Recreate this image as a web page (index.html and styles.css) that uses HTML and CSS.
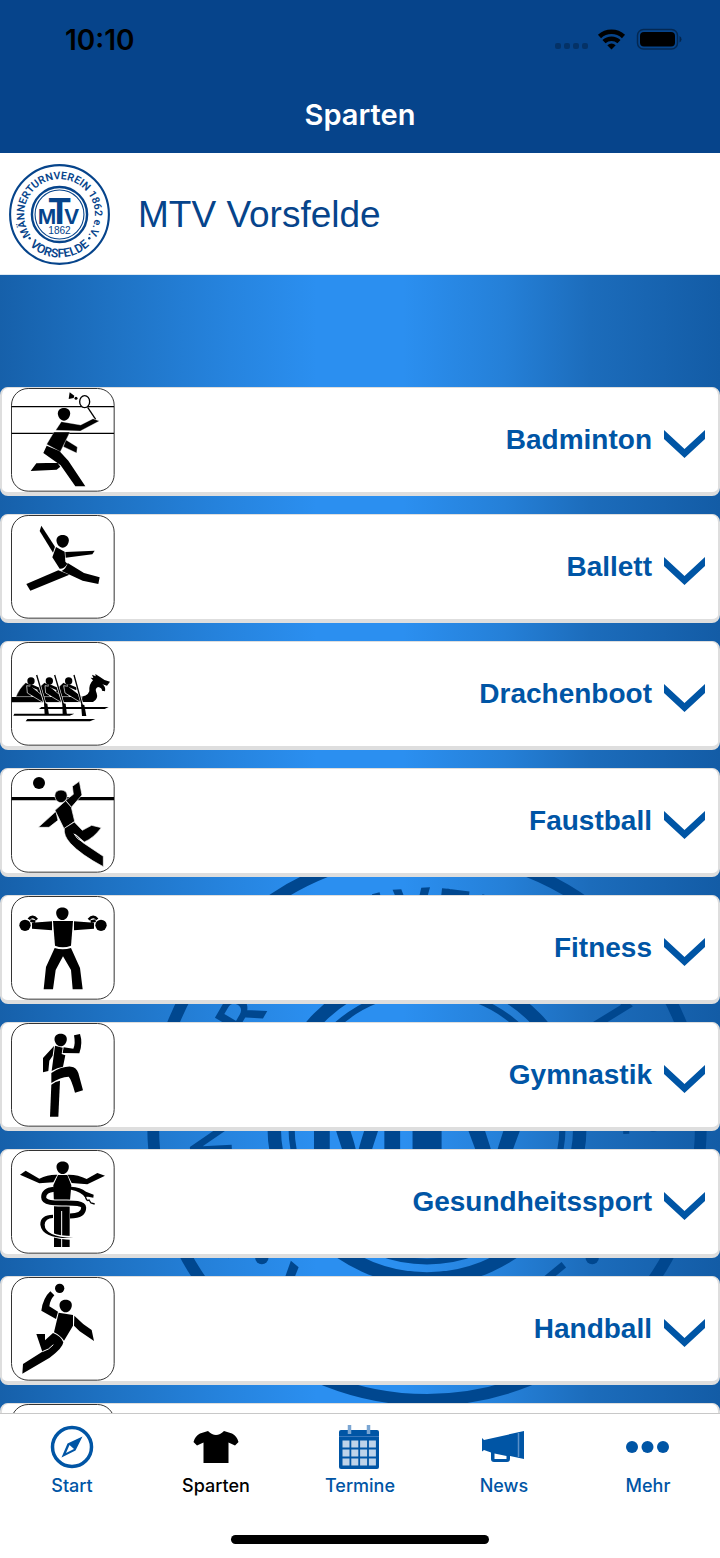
FILE: index.html
```html
<!DOCTYPE html>
<html lang="de">
<head>
<meta charset="utf-8">
<meta name="viewport" content="width=device-width, initial-scale=1">
<title>Sparten</title>
<link rel="stylesheet" href="styles.css">
</head>
<body>
<svg class="defs" aria-hidden="true">
  <defs>
    <path id="arc-top" d="M-28.500 20.300A35 35 0 1 1 28.500 20.300"/>
    <path id="arc-bottom" d="M-37 21A42.500 42.500 0 0 0 37 21"/>
    <symbol id="emblem" viewBox="-50 -50 100 100">
      <g fill="none" stroke="currentColor">
        <circle r="48.900" stroke-width="2.100"/>
        <circle r="27.300" stroke-width="2.400"/>
        <circle r="24.200" stroke-width="1.100"/>
      </g>
      <g fill="currentColor" text-anchor="middle">
        <text class="ring-text"><textPath href="#arc-top" startOffset="50%">MÄNNERTURNVEREIN 1862 e.V.</textPath></text>
        <text class="ring-text ring-town"><textPath href="#arc-bottom" startOffset="50%">VORSFELDE</textPath></text>
        <circle cx="-29.500" cy="23.500" r="1.200"/><circle cx="29.500" cy="23.500" r="1.200"/>
        <text class="mono-side" x="-12.500" y="9">M</text>
        <text class="mono-mid" x="0" y="9">T</text>
        <text class="mono-side" x="12" y="9">V</text>
        <text class="year" x="0" y="19">1862</text>
      </g>
    </symbol>
    <symbol id="chevron" viewBox="0 0 41 28"><path d="M0 0 20.500 19 41 0V9L20.500 28 0 9z" fill="currentColor"/></symbol>
    <path id="head" d="M-18.500-3C-18.500-24 18.500-24 18.500-3 18.500 9 10 19 0 19S-18.500 9-18.500-3z"/>
  </defs>
</svg>

<header class="topbar">
  <div class="status">
    <span class="clock">10:10</span>
    <svg class="status-icons" viewBox="0 0 128 24" aria-hidden="true">
      <g opacity=".25"><rect x="0" y="15" width="6" height="6" rx="2"/><rect x="9" y="15" width="6" height="6" rx="2"/><rect x="18" y="15" width="6" height="6" rx="2"/><rect x="27" y="15" width="6" height="6" rx="2"/></g>
      <g fill="none" stroke="#000" stroke-width="4.500"><path d="M44.500 8.500a17.500 17.500 0 0 1 24 0"/><path d="M49 13.700a11 11 0 0 1 15 0"/></g>
      <path d="M52.300 17.300a6.500 6.500 0 0 1 8.400 0L56.500 21.600z"/>
      <rect x="82.500" y="1.500" width="40" height="19.500" rx="6" fill="none" stroke="#000" stroke-opacity=".4" stroke-width="1.500"/>
      <rect x="85" y="4" width="35" height="14.500" rx="4"/>
      <path d="M124.500 8v6.500q2-1 2-3.250T124.500 8" opacity=".45"/>
    </svg>
  </div>
  <h1 class="title">Sparten</h1>
</header>

<div class="brand">
  <svg class="brand-logo" aria-hidden="true"><use href="#emblem"/></svg>
  <span class="brand-name">MTV Vorsfelde</span>
</div>

<main class="content">
  <svg class="watermark" aria-hidden="true"><use href="#emblem"/></svg>
  <div class="list">
    <button class="card" type="button">
      <svg class="picto" viewBox="33 26 312 312" aria-hidden="true">
        <rect class="frame" x="34.500" y="27.500" width="308" height="308" rx="50"/>
        <path d="M35 82H342M35 162H342" stroke="#000" stroke-width="4"/>
        <path d="M209 39 223 49 221 56 206 59z"/><circle cx="228" cy="57" r="4.500"/>
        <ellipse cx="254" cy="67" rx="15" ry="18" fill="#fff" stroke="#000" stroke-width="4"/>
        <path d="M263 84 287 120" stroke="#000" stroke-width="4"/>
        <use href="#head" x="192" y="105"/>
        <g stroke="#fff" stroke-width="1">
          <path d="M184 127 242 137 279 118 298 125 241 155 167 153z"/>
          <path d="M197 181 232 203 230 221 190 202z"/>
          <path d="M162 158H210L181 217 140 195z"/>
        </g>
        <path d="M109 252 172 250 181 262 170 271 92 275zM140 199 178 215 205 244 256 321H226L182 258 130 221z"/>
      </svg>
      <span class="label">Badminton</span><svg class="chevron" aria-hidden="true"><use href="#chevron"/></svg>
    </button>
    <button class="card" type="button">
      <svg class="picto" viewBox="33 14 312 312" aria-hidden="true">
        <rect class="frame" x="34.500" y="15.500" width="308" height="308" rx="50"/>
        <path d="M124 46 165 109 159 127 119 62z"/>
        <use href="#head" x="188" y="93"/>
        <path d="M196 125 284 121 277 132 197 142z"/>
        <path d="M168 110 194 124 196 154 202 160Q193 176 179 175L157 141z"/>
        <path d="M175 180 208 193 91 241 79 221z"/>
        <path d="M203 158 252 188 299 201 295 221 248 211 185 182Q199 174 203 158z"/>
      </svg>
      <span class="label">Ballett</span><svg class="chevron" aria-hidden="true"><use href="#chevron"/></svg>
    </button>
    <button class="card" type="button">
      <svg class="picto" viewBox="33 17 312 312" aria-hidden="true">
        <rect class="frame" x="34.500" y="18.500" width="308" height="308" rx="50"/>
        <path d="M35 182H235Q262 182 268 165 266 144 279 132L272 124 280 125 276 115 287 120 286 113 299 121Q311 132 330 136L321 148 307 144Q318 151 315 165L306 163Q306 154 294 152 283 156 290 171 296 188 279 197L35 198z"/>
        <path d="M124 212H326L314 218H117zM43 232H223L209 238H40zM82 248H286L270 255H77z"/>
        <g stroke="#fff" stroke-width="1">
          <path d="M48 181Q57 157 77 139L91 145 84 164 96 181z"/><path d="M102 181Q111 157 133 139L146 145 139 164 151 181z"/><path d="M158 181Q168 157 190 139L204 145 197 164 209 181z"/>
        </g>
        <g stroke="#fff" stroke-width="2">
          <path d="M80 148 94 150 131 181 130 199 82 170zM135 148 149 150 186 181 185 199 137 170zM191 148 205 150 246 181 243 199 195 170z"/>
        </g>
        <path d="M91 147 117 158M146 147 172 158M204 147 230 158" stroke="#000" stroke-width="8"/>
        <circle cx="93" cy="134" r="11"/><circle cx="148" cy="134" r="11"/><circle cx="206" cy="134" r="11"/>
        <path d="M110 116 136 206M164 116 190 206M222 116 247 206" fill="none" stroke="#fff" stroke-width="8"/>
        <path d="M110 116 137 208M164 116 191 208M222 116 247 208" fill="none" stroke="#000" stroke-width="4"/>
        <path d="M132 200 142 202 147 236H134zM187 200 197 202 201 236H188zM243 204 253 206 259 239H246z"/>
      </svg>
      <span class="label">Drachenboot</span><svg class="chevron" aria-hidden="true"><use href="#chevron"/></svg>
    </button>
    <button class="card" type="button">
      <svg class="picto" viewBox="33 15 312 312" aria-hidden="true">
        <rect class="frame" x="34.500" y="16.500" width="308" height="308" rx="50"/>
        <path d="M35 104H342" stroke="#000" stroke-width="10"/>
        <circle cx="117" cy="57" r="18"/>
        <g stroke="#fff" stroke-width="2">
          <path d="M217 67 238 52 246 93 214 130 197 109 220 91z"/>
          <use href="#head" x="183" y="97"/>
          <path d="M168 142 174 169 147 190H115z"/>
          <path d="M165 139 197 110 214 130 224 172 192 194z"/>
          <path d="M193 193 223 174 247 199 275 184 304 191Q281 222 253 234L226 211 249 236 310 277V308Q242 272 211 238 190 215 193 193z"/>
        </g>
        <path d="M222 209Q230 226 249 234" fill="none" stroke="#fff" stroke-width="3"/>
      </svg>
      <span class="label">Faustball</span><svg class="chevron" aria-hidden="true"><use href="#chevron"/></svg>
    </button>
    <button class="card" type="button">
      <svg class="picto" viewBox="33 17 312 312" aria-hidden="true">
        <rect class="frame" x="34.500" y="18.500" width="308" height="308" rx="50"/>
        <use href="#head" x="187" y="70"/>
        <path d="M86 87Q97 72 111 88M266 88Q280 72 292 87" fill="none" stroke="#000" stroke-width="8"/>
        <circle cx="75" cy="105" r="17"/><circle cx="303" cy="105" r="17"/>
        <path d="M96 97 156 93V120L96 115zM222 93 282 97V115L222 120z"/>
        <path d="M91 91 106 94M272 94 287 91" stroke="#000" stroke-width="8"/>
        <path d="M159 92H219L213 166Q188 176 165 166z"/>
        <path d="M164 173Q188 181 213 173L240 233 248 297H218L213 239 189 198 167 239 159 297H131L138 230z"/>
      </svg>
      <span class="label">Fitness</span><svg class="chevron" aria-hidden="true"><use href="#chevron"/></svg>
    </button>
    <button class="card" type="button">
      <svg class="picto" viewBox="33 20 312 312" aria-hidden="true">
        <rect class="frame" x="34.500" y="21.500" width="308" height="308" rx="50"/>
        <use href="#head" x="182" y="71"/>
        <path d="M222 57 240 53Q249 80 238 111L188 110 191 93 220 97Q227 83 222 57z"/>
        <path d="M162 89 158 118 148 133 145 164 129 168V125z"/>
        <path d="M165 88 188 94 185 113 196 117 189 151Q172 153 155 164z"/>
        <path d="M154 170Q188 149 213 151 229 152 235 170L249 222 225 229Q214 189 206 181 181 182 154 200z"/>
        <path d="M154 205Q166 195 180 193L175 301H150z"/>
      </svg>
      <span class="label">Gymnastik</span><svg class="chevron" aria-hidden="true"><use href="#chevron"/></svg>
    </button>
    <button class="card" type="button">
      <svg class="picto" viewBox="33 17 312 312" aria-hidden="true">
        <rect class="frame" x="34.500" y="18.500" width="308" height="308" rx="50"/>
        <use href="#head" x="188" y="70"/>
        <path d="M77 79 118 103Q143 90 172 91L160 114 118 117 60 91zM203 91Q233 90 260 104L292 86 315 94 262 120 215 116z"/>
        <path d="M174 92H202L214 123 209 180V308H162V180L160 123z"/>
        <path d="M185 200V308" stroke="#fff" stroke-width="3"/>
        <path d="M150 140Q131 144 131 159C131 193 249 160 251 190Q251 208 228 213" fill="none" stroke="#fff" stroke-width="21"/>
        <path d="M150 216Q127 218 127 240 131 279 220 281" fill="none" stroke="#fff" stroke-width="12"/>
        <path d="M162 135Q131 138 131 159C131 193 249 160 251 190Q251 214 210 215" fill="none" stroke="#000" stroke-width="15"/>
        <path d="M159 211Q120 212 121 241 127 285 220 281 134 276 134 241 136 221 159 221z"/>
        <path d="M213 127Q242 129 258 142L281 151 280 160 264 157 254 158Q245 143 213 136z"/>
        <path d="M256 156Q260 173 267 167L273 176 284 179" fill="none" stroke="#000" stroke-width="4"/>
      </svg>
      <span class="label">Gesundheitssport</span><svg class="chevron" aria-hidden="true"><use href="#chevron"/></svg>
    </button>
    <button class="card" type="button">
      <svg class="picto" viewBox="33 20 312 312" aria-hidden="true">
        <rect class="frame" x="34.500" y="21.500" width="308" height="308" rx="50"/>
        <circle cx="179" cy="54" r="14"/>
        <use href="#head" x="197" y="107"/>
        <path d="M151 63 163 75Q150 89 148 108L174 124 168 146 124 121Q129 83 151 63z"/>
        <path d="M176 127 219 134 219 166 192 211Q180 194 162 186z"/>
        <path d="M223 136Q249 163 275 179L282 212 239 183 222 166z"/>
        <path d="M109 191H135V210L159 188Q183 197 190 216 188 234 149 262L67 310 69 281 127 244z"/>
        <path d="M127 244Q148 238 160 223" fill="none" stroke="#fff" stroke-width="3"/>
      </svg>
      <span class="label">Handball</span><svg class="chevron" aria-hidden="true"><use href="#chevron"/></svg>
    </button>
    <div class="card">
      <svg class="picto" viewBox="33 20 312 312" aria-hidden="true"><rect class="frame" x="34.500" y="21.500" width="308" height="308" rx="50"/></svg>
    </div>
  </div>
</main>

<footer class="bottom">
  <nav class="tabs">
    <a class="tab" href="#start">
      <svg class="tab-icon" viewBox="0 0 44 44" aria-hidden="true"><circle cx="22" cy="22" r="19.500" fill="none" stroke="currentColor" stroke-width="3.500"/><path fill-rule="evenodd" d="M32.500 11.500 25.500 25.500 11.500 32.500 17.500 18.500zM19.500 20 16 28 24 24z" fill="currentColor"/></svg>
      <span>Start</span>
    </a>
    <a class="tab active" href="#sparten" aria-current="page">
      <svg class="tab-icon" viewBox="0 0 44 44" aria-hidden="true"><path d="M14 6Q22 14 30 6L38 8.500Q43 11 44.500 17L41 20.500 34.500 17.500V38H9.500V17.500L3 20.500-.5 17Q1 11 6 8.500z" fill="currentColor"/></svg>
      <span>Sparten</span>
    </a>
    <a class="tab" href="#termine">
      <svg class="tab-icon" viewBox="0 0 44 44" aria-hidden="true"><rect x="1" y="5" width="40" height="39" rx="2" fill="currentColor"/><path d="M1 11.500H41" stroke="#3978bd"/><path d="M11.500 0V9M30.500 0V9" stroke="#7ba6d3" stroke-width="3.500"/><g fill="#bed3e9"><path d="M4.500 15.500h7v7h-7zM13.300 15.500h7v7h-7zM22.100 15.500h7v7h-7zM30.900 15.500h7v7h-7zM4.500 24.500h7v7h-7zM13.300 24.500h7v7h-7zM22.100 24.500h7v7h-7zM30.900 24.500h7v7h-7zM4.500 33.500h7v7h-7zM13.300 33.500h7v7h-7zM22.100 33.500h7v7h-7zM30.900 33.500h7v7h-7z"/></g></svg>
      <span>Termine</span>
    </a>
    <a class="tab" href="#news">
      <svg class="tab-icon" viewBox="0 0 44 44" aria-hidden="true"><path d="M0 13 2 15 42 6V34L28 31V34Q28 37 25 37H12Q9 37 9 34V27.500L2 25 0 26.500zM12.500 28.500V34H24.500V31z" fill="currentColor" fill-rule="evenodd"/><path d="M36.500 8V32" stroke="#5a90c9" stroke-width="1.500"/></svg>
      <span>News</span>
    </a>
    <a class="tab" href="#mehr">
      <svg class="tab-icon" viewBox="0 0 44 44" aria-hidden="true"><g fill="currentColor"><circle cx="6" cy="22" r="6"/><circle cx="21.500" cy="22" r="6"/><circle cx="37" cy="22" r="6"/></g></svg>
      <span>Mehr</span>
    </a>
  </nav>
  <div class="home-indicator"></div>
</footer>
</body>
</html>
```

FILE: styles.css
```css
:root {
  --navy: #06448b;
  --blue: #0055a5;
  --line: #dedede;
}

* { box-sizing: border-box; }

body {
  margin: 0;
  height: 100vh;
  display: flex;
  flex-direction: column;
  background: #fff;
  font-family: Inter, "Liberation Sans", sans-serif;
}

.defs {
  position: absolute;
  width: 0;
  height: 0;
}

.topbar {
  flex: none;
  background: var(--navy);
  padding-bottom: 20px;
}

.status {
  display: flex;
  justify-content: space-between;
  align-items: center;
  height: 80px;
  padding: 0 37px 0 65px;
}

.clock {
  font-size: 28px;
  font-weight: 600;
  line-height: 32px;
}

.status-icons {
  width: 128px;
  height: 24px;
}

.title {
  margin: 17px 0 0;
  color: #fff;
  font-size: 29px;
  font-weight: 600;
  line-height: 36px;
  text-align: center;
}

.brand {
  flex: none;
  display: flex;
  align-items: center;
  gap: 28px;
  height: 122px;
  padding: 2px 9px 0;
  border-bottom: 1px solid #dde9f3;
}

.brand-logo {
  width: 101px;
  height: 101px;
  color: var(--navy);
}

.brand-name {
  color: var(--navy);
  font-family: "Liberation Sans", Arial, sans-serif;
  font-size: 37px;
  line-height: 44px;
}

.ring-text {
  font-family: Roboto, "Liberation Sans", sans-serif;
  font-size: 10.5px;
  font-weight: 600;
}

.ring-town { font-size: 12px; }

.mono-side,
.mono-mid {
  font-family: "Liberation Sans", sans-serif;
  font-size: 22px;
  font-weight: 700;
}

.mono-mid { font-size: 36px; }

.year {
  font-family: "Liberation Sans", sans-serif;
  font-size: 10px;
}

.content {
  position: relative;
  flex: 1;
  min-height: 0;
  overflow: hidden;
  background: linear-gradient(90deg, #1660aa 0%, #1f74c6 17%, #2684df 32%, #2b8ff0 44%, #2b8ff0 56%, #2580d8 70%, #1c6cbb 82%, #135ca6 100%);
}

.watermark {
  position: absolute;
  top: 571px;
  left: calc(50% - 213px);
  width: 560px;
  height: 560px;
  color: #00478f;
}

.list {
  position: relative;
  display: flex;
  flex-direction: column;
  gap: 18px;
  padding-top: 112px;
}

.card {
  flex: none;
  display: flex;
  align-items: center;
  height: 109px;
  padding: 0 13px 0 9px;
  border: 2px solid var(--line);
  border-width: 1px 2px 4px;
  border-radius: 8px;
  background: #fff;
  color: var(--blue);
  font-family: "Liberation Sans", Arial, sans-serif;
  font-size: 28px;
  font-weight: 700;
  line-height: 32px;
}

.picto {
  width: 104px;
  height: 104px;
}

.frame {
  fill: none;
  stroke: #333;
  stroke-width: 3;
}

.label {
  flex: 1;
  text-align: right;
}

.chevron {
  width: 41px;
  height: 28px;
  margin: 8px 0 0 12px;
}

.bottom {
  flex: none;
  display: flex;
  flex-direction: column;
  align-items: center;
  padding-bottom: 14px;
  border-top: 1px solid #c8c8c8;
  background: #fff;
}

.tabs {
  display: flex;
  align-self: stretch;
  padding: 11px 0 37px;
}

.tab {
  flex: 1;
  display: flex;
  flex-direction: column;
  align-items: center;
  gap: 5px;
  color: var(--blue);
  font-size: 18px;
  font-weight: 500;
  line-height: 24px;
  text-decoration: none;
}

.tab.active { color: #000; }

.tab-icon {
  width: 44px;
  height: 44px;
  overflow: visible;
}

.home-indicator {
  width: 258px;
  height: 9px;
  border-radius: 5px;
  background: #000;
}
```
